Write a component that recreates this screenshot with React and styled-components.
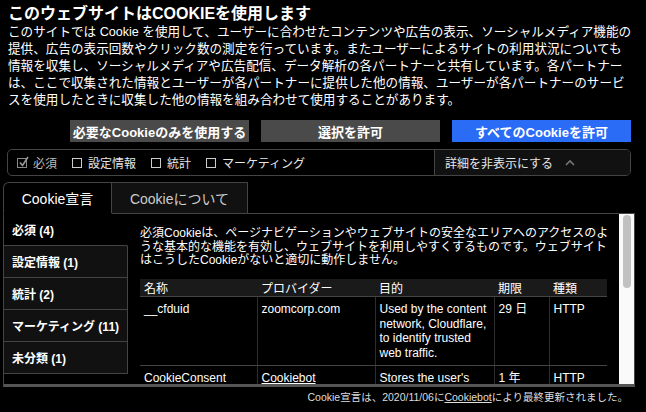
import React from "react";
import styled, { createGlobalStyle } from "styled-components";

const GlobalStyle = createGlobalStyle`
  html, body { margin: 0; padding: 0; background: #000; }
  body { font-family: "Liberation Sans", "Noto Sans CJK JP", sans-serif; color: #fff; }
  * { box-sizing: border-box; }
`;

const Page = styled.div`
  width: 646px;
  height: 412px;
  overflow: hidden;
  background: #000;
`;

const Header = styled.header`
  padding: 4px 8px 0;
`;

const Title = styled.h2`
  margin: 0;
  font-size: 16px;
  line-height: 20px;
  font-weight: 700;
`;

const Intro = styled.p`
  margin: 0;
  font-size: 12.6px;
  line-height: 17px;
  white-space: nowrap;
`;

const ButtonRow = styled.div`
  display: flex;
  justify-content: flex-end;
  gap: 12px;
  padding-right: 15px;
  margin-top: 11px;
`;

const ActionButton = styled.button`
  width: 179px;
  height: 22px;
  border: 0;
  padding: 0;
  font-family: inherit;
  font-size: 13px;
  font-weight: 700;
  color: #fff;
  background: ${(p) => (p.$primary ? "#2a6cf6" : "#4a4a4a")};
`;

const Selector = styled.div`
  display: flex;
  height: 27px;
  margin: 7px 15px 0 7px;
  border: 1px solid #444;
  border-radius: 5px;
  overflow: hidden;
`;

const Options = styled.div`
  flex: 1;
  display: flex;
  align-items: center;
  gap: 15px;
  padding-left: 9px;
`;

const Option = styled.label`
  display: flex;
  align-items: center;
  gap: 6px;
  font-size: 12px;
  color: ${(p) => (p.$disabled ? "#bbb" : "#e6e6e6")};
`;

const Box = styled.span`
  position: relative;
  width: 10px;
  height: 10px;
  border: 1px solid ${(p) => (p.$checked ? "#888" : "#ccc")};
  svg { position: absolute; left: 0; top: -3px; }
`;

const DetailsToggle = styled.div`
  width: 196px;
  display: flex;
  align-items: center;
  gap: 12px;
  padding-left: 10px;
  background: #111;
  border-left: 1px solid #444;
  font-size: 12px;
  color: #e6e6e6;
`;

const Tabs = styled.div`
  display: flex;
  align-items: flex-start;
  margin: 6px 0 -1px 3px;
  position: relative;
  z-index: 1;
`;

const Tab = styled.div`
  display: flex;
  align-items: center;
  justify-content: center;
  width: ${(p) => p.$w}px;
  height: ${(p) => (p.$active ? 32 : 31)}px;
  font-size: 14px;
  color: ${(p) => (p.$active ? "#fff" : "#ccc")};
  background: ${(p) => (p.$active ? "#000" : "#111")};
  border: 1px solid #444;
  border-bottom: ${(p) => (p.$active ? "1px solid #000" : "0")};
  border-left-width: ${(p) => (p.$active ? 1 : 0)}px;
  border-radius: ${(p) => (p.$active ? "6px 0 0 0" : "0")};
`;

const Panel = styled.div`
  display: flex;
  width: 632px;
  height: 174px;
  margin-left: 3px;
  border: 1px solid #444;
  border-bottom: 3px solid #555;
  overflow: hidden;
`;

const Nav = styled.div`
  width: 124px;
  flex: none;
`;

const NavItem = styled.div`
  height: 32px;
  display: flex;
  align-items: center;
  padding-left: 8px;
  font-size: 12px;
  font-weight: 700;
  background: ${(p) => (p.$active ? "#000" : "#111")};
  border-bottom: 1px solid #444;
  border-right: 1px solid ${(p) => (p.$active ? "#000" : "#444")};
`;

const Content = styled.div`
  flex: 1;
  padding: 13px 12px 0;
  overflow: hidden;
`;

const Description = styled.p`
  margin: 0;
  font-size: 12px;
  line-height: 13.5px;
  white-space: nowrap;
`;

const Table = styled.table`
  width: 467px;
  margin-top: 11px;
  border-collapse: collapse;
  table-layout: fixed;
  font-size: 12px;
  th {
    height: 18px;
    padding: 0 4px;
    text-align: left;
    font-weight: 400;
    background: #1a1a1a;
    border-bottom: 1px solid #444;
  }
  td {
    vertical-align: top;
    padding: 5px 4px 5px;
    line-height: 14.5px;
    border-bottom: 1px solid #444;
    border-left: 1px solid #2e2e2e;
  }
  td:first-child { border-left: 0; }
  a { color: #fff; }
`;

const Scrollbar = styled.div`
  width: 15px;
  flex: none;
  background: #fafafa;
  padding: 1px 0 0 4px;
`;

const Thumb = styled.div`
  width: 8px;
  height: 73px;
  border-radius: 4px;
  background: #c1c1c1;
`;

const Footer = styled.footer`
  padding: 3px 18px 0 0;
  text-align: right;
  font-size: 10.5px;
  line-height: 14px;
  color: #ddd;
  a { color: #ddd; }
`;

const Check = () => (
  <svg width="12" height="12" viewBox="0 0 12 12">
    <path d="M2 6.5 L4.5 9.5 L10 1" fill="none" stroke="#999" strokeWidth="1.6" />
  </svg>
);

const Chevron = () => (
  <svg width="10" height="7" viewBox="0 0 10 7">
    <path d="M1 6 L5 2 L9 6" fill="none" stroke="#777" strokeWidth="1.6" />
  </svg>
);

const options = [
  { label: "必須", checked: true },
  { label: "設定情報" },
  { label: "統計" },
  { label: "マーケティング" },
];

const categories = ["必須 (4)", "設定情報 (1)", "統計 (2)", "マーケティング (11)", "未分類 (1)"];

export default function App() {
  return (
    <Page>
      <GlobalStyle />
      <Header>
        <Title>このウェブサイトはCOOKIEを使用します</Title>
        <Intro>
          このサイトでは Cookie を使用して、ユーザーに合わせたコンテンツや広告の表示、ソーシャルメディア機能の
          <br />
          提供、広告の表示回数やクリック数の測定を行っています。またユーザーによるサイトの利用状況についても
          <br />
          情報を収集し、ソーシャルメディアや広告配信、データ解析の各パートナーと共有しています。各パートナー
          <br />
          は、ここで収集された情報とユーザーが各パートナーに提供した他の情報、ユーザーが各パートナーのサービ
          <br />
          スを使用したときに収集した他の情報を組み合わせて使用することがあります。
        </Intro>
      </Header>

      <ButtonRow>
        <ActionButton>必要なCookieのみを使用する</ActionButton>
        <ActionButton>選択を許可</ActionButton>
        <ActionButton $primary>すべてのCookieを許可</ActionButton>
      </ButtonRow>

      <Selector>
        <Options>
          {options.map((o) => (
            <Option key={o.label} $disabled={o.checked}>
              <Box $checked={o.checked}>{o.checked && <Check />}</Box>
              {o.label}
            </Option>
          ))}
        </Options>
        <DetailsToggle>
          詳細を非表示にする
          <Chevron />
        </DetailsToggle>
      </Selector>

      <Tabs>
        <Tab $active $w={109}>Cookie宣言</Tab>
        <Tab $w={136}>Cookieについて</Tab>
      </Tabs>

      <Panel>
        <Nav>
          {categories.map((c, i) => (
            <NavItem key={c} $active={i === 0}>{c}</NavItem>
          ))}
        </Nav>
        <Content>
          <Description>
            必須Cookieは、ページナビゲーションやウェブサイトの安全なエリアへのアクセスのよ
            <br />
            うな基本的な機能を有効し、ウェブサイトを利用しやすくするものです。ウェブサイト
            <br />
            はこうしたCookieがないと適切に動作しません。
          </Description>
          <Table>
            <colgroup>
              <col style={{ width: 117 }} />
              <col style={{ width: 118 }} />
              <col style={{ width: 119 }} />
              <col style={{ width: 55 }} />
              <col style={{ width: 58 }} />
            </colgroup>
            <thead>
              <tr>
                <th>名称</th>
                <th>プロバイダー</th>
                <th>目的</th>
                <th>期限</th>
                <th>種類</th>
              </tr>
            </thead>
            <tbody>
              <tr>
                <td>__cfduid</td>
                <td>zoomcorp.com</td>
                <td>
                  Used by the content<br />network, Cloudflare,<br />to identify trusted<br />web traffic.
                </td>
                <td>29 日</td>
                <td>HTTP</td>
              </tr>
              <tr>
                <td>CookieConsent</td>
                <td><a href="#">Cookiebot</a></td>
                <td>Stores the user's</td>
                <td>1 年</td>
                <td>HTTP</td>
              </tr>
            </tbody>
          </Table>
        </Content>
        <Scrollbar>
          <Thumb />
        </Scrollbar>
      </Panel>

      <Footer>
        Cookie宣言は、2020/11/06に<a href="#">Cookiebot</a>により最終更新されました。
      </Footer>
    </Page>
  );
}
